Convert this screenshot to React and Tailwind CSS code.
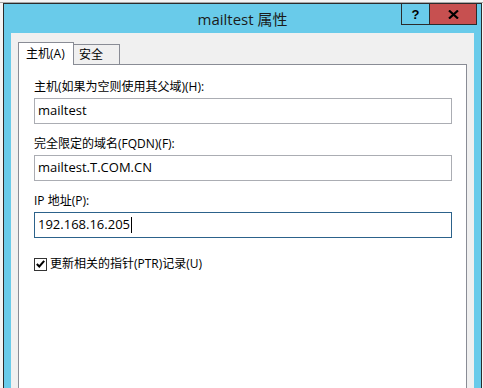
export default function App() {
  const font = { fontFamily: '"Open Sans", "Noto Sans CJK SC", sans-serif' };
  return (
    <div className="w-[483px] h-[388px] bg-[#f4f4f4] pt-[2px] overflow-hidden" style={font}>
      <div className="border-t border-[#a8a8a8] h-full pl-[3px] pr-[1px]">
        <div className="w-[479px] h-full border-x border-t border-[#2b2b2b] bg-[#69cbea] flex flex-col">
          <div className="h-[29px] grid grid-cols-[1fr_auto_1fr] items-center">
            <div />
            <div className="text-[15px] text-[#1b1b1b] leading-none pt-[1px]">mailtest 属性</div>
            <div className="justify-self-end self-start flex -mt-px mr-[4px]">
              <div className="w-[29px] h-[22px] border border-[#2b2b2b] bg-[#69cbea] flex items-center justify-center text-[13px] font-bold text-black leading-none" style={{ fontFamily: '"Liberation Sans", sans-serif' }}>?</div>
              <div className="w-[47px] h-[22px] border border-l-0 border-[#2b2b2b] bg-[#c75050] flex items-center justify-center">
                <svg width="11" height="9" viewBox="0 0 11 9">
                  <path d="M1 0.5 L10 8.5 M10 0.5 L1 8.5" stroke="#000" strokeWidth="2.2" />
                </svg>
              </div>
            </div>
          </div>
          <div className="flex-1 mx-[7px] bg-[#f0f0f0] pl-[7px] pr-[7px] pt-[9px] flex flex-col">
            <div className="flex items-end">
              <div className="relative z-10 w-[56px] h-[23px] -mb-px bg-white border-x border-t border-[#898c95] text-[12px] text-black flex items-center pl-[7px] pb-[1px]">主机(A)</div>
              <div className="w-[47px] h-[20px] -ml-px bg-[#f0f0f0] border-x border-t border-[#898c95] text-[12px] text-black flex items-center pl-[5px] pt-[1px]">安全</div>
            </div>
            <div className="flex-1 bg-white border-x border-t border-[#898c95] pl-[15px] pt-[14px] flex flex-col">
              <div className="text-[12px] leading-[16px] text-black">主机(如果为空则使用其父域)(H):</div>
              <div className="mt-[3px] w-[418px] h-[26px] border border-[#abadb3] flex items-center pl-[3px] text-[13px] text-black">mailtest</div>
              <div className="mt-[12px] text-[12px] leading-[16px] text-black">完全限定的域名(FQDN)(F):</div>
              <div className="mt-[3px] w-[418px] h-[26px] border border-[#abadb3] flex items-center pl-[3px] text-[13px] text-black">mailtest.T.COM.CN</div>
              <div className="mt-[12px] text-[12px] leading-[16px] text-black">IP 地址(P):</div>
              <div className="mt-[3px] w-[418px] h-[26px] border border-[#2c628b] flex items-center pl-[3px] text-[13px] text-black">
                <span>192.168.16.205</span>
                <span className="w-px h-[16px] bg-black ml-px" />
              </div>
              <div className="mt-[18px] flex items-center">
                <div className="w-[13px] h-[13px] border border-[#333] bg-white flex items-center justify-center">
                  <svg width="9" height="8" viewBox="0 0 9 8">
                    <path d="M0.8 4 L3.3 6.5 L8.2 0.8" stroke="#000" strokeWidth="2" fill="none" />
                  </svg>
                </div>
                <span className="ml-[3px] text-[12px] leading-[16px] text-black">更新相关的指针(PTR)记录(U)</span>
              </div>
            </div>
          </div>
        </div>
      </div>
    </div>
  );
}
